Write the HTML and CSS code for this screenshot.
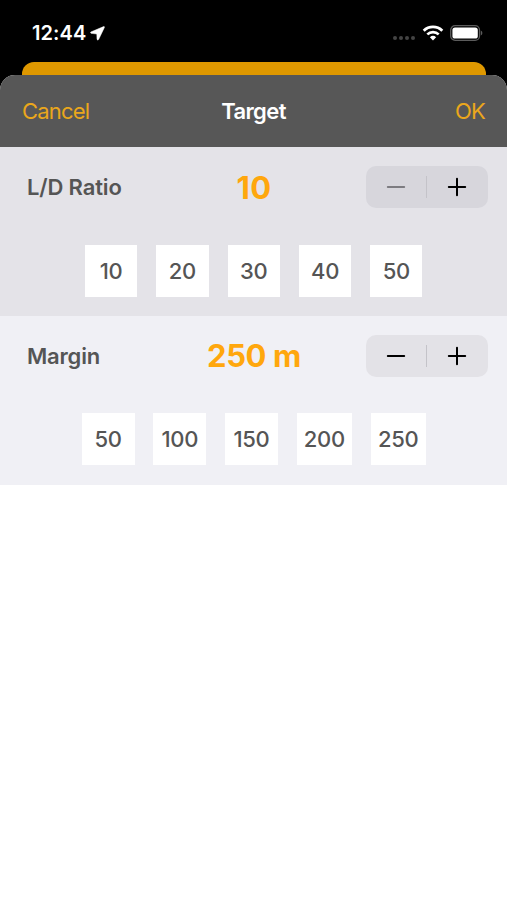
FILE: index.html
```html
<!DOCTYPE html>
<html lang="en">
<head>
    <meta charset="UTF-8">
    <meta name="viewport" content="width=device-width, initial-scale=1.0">
    <title>Target</title>
    <link rel="stylesheet" href="styles.css">
</head>
<body>
    <div class="status-bar">
        <div class="status-left">
            <span class="time">12:44</span>
            <svg class="location" width="15" height="15" viewBox="0 0 15 15">
                <path d="M13.6 0.6 L0.8 6 Q0 6.8 1 7.3 L6.8 8 L7 13.4 Q7.6 14.6 8.6 13.6 L14.4 1.4 Q14.6 0.3 13.6 0.6 Z" fill="#fff" stroke="#fff" stroke-width="0.5"/>
            </svg>
        </div>
        <div class="status-right">
            <svg width="24" height="6" viewBox="0 0 24 6" fill="#444">
                <circle cx="3" cy="3" r="2"/>
                <circle cx="9" cy="3" r="2"/>
                <circle cx="15" cy="3" r="2"/>
                <circle cx="21" cy="3" r="2"/>
            </svg>
            <svg class="wifi" width="22" height="16" viewBox="0 0 22 16">
                <path d="M1.7 5.7 A13.3 13.3 0 0 1 20.3 5.7" fill="none" stroke="#fff" stroke-width="2.8"/>
                <path d="M5.3 9.4 A8.2 8.2 0 0 1 16.7 9.4" fill="none" stroke="#fff" stroke-width="2.6"/>
                <path d="M7.9 12.2 A4.5 4.5 0 0 1 14.1 12.2 L11 15.4 Z" fill="#fff"/>
            </svg>
            <svg class="battery" width="33" height="16" viewBox="0 0 33 16">
                <rect x="0.7" y="0.7" width="28.8" height="14.6" rx="4.4" fill="none" stroke="#5c5c5c" stroke-width="1.3"/>
                <rect x="2.4" y="2.4" width="25.4" height="11.2" rx="2.6" fill="#fff"/>
                <path d="M30.8 5.4 Q32.4 6.2 32.4 8 Q32.4 9.8 30.8 10.6 Z" fill="#5c5c5c"/>
            </svg>
        </div>
    </div>
    <div class="back-card"></div>
    <div class="sheet">
        <div class="navbar">
            <a class="cancel">Cancel</a>
            <h1>Target</h1>
            <a class="ok">OK</a>
        </div>
        <div class="section ratio">
            <div class="row">
                <span class="label label-ratio">L/D Ratio</span>
                <span class="value">10</span>
                <div class="stepper">
                    <svg class="disabled" width="20" height="20" viewBox="0 0 20 20"><path d="M1.8 10 H18.2"/></svg>
                    <span class="divider"></span>
                    <svg width="20" height="20" viewBox="0 0 20 20"><path d="M1.8 10 H18.2 M10 1.8 V18.2"/></svg>
                </div>
            </div>
            <div class="presets">
                <button>10</button>
                <button>20</button>
                <button>30</button>
                <button>40</button>
                <button>50</button>
            </div>
        </div>
        <div class="section margin">
            <div class="row">
                <span class="label">Margin</span>
                <span class="value">250 m</span>
                <div class="stepper">
                    <svg width="20" height="20" viewBox="0 0 20 20"><path d="M1.8 10 H18.2"/></svg>
                    <span class="divider"></span>
                    <svg width="20" height="20" viewBox="0 0 20 20"><path d="M1.8 10 H18.2 M10 1.8 V18.2"/></svg>
                </div>
            </div>
            <div class="presets">
                <button>50</button>
                <button>100</button>
                <button>150</button>
                <button class="wide">200</button>
                <button class="wide">250</button>
            </div>
        </div>
    </div>
</body>
</html>
```
FILE: styles.css
```css
* {
    box-sizing: border-box;
}
body {
    font-family: Inter, "Liberation Sans", sans-serif;
    margin: 0;
    background: #000;
    color: #555;
    height: 900px;
    overflow: hidden;
    display: flex;
    flex-direction: column;
}
.status-bar {
    height: 62px;
    padding: 0 24px 0 32px;
    display: flex;
    justify-content: space-between;
}
.status-left {
    display: flex;
    padding-top: 21px;
}
.time {
    color: #fff;
    font-size: 20px;
    font-weight: 600;
    line-height: 25px;
    letter-spacing: 0.1px;
}
.location {
    margin: 5px 0 0 4px;
}
.status-right {
    display: flex;
    padding-top: 25px;
}
.status-right svg:first-child {
    margin-top: 10px;
}
.wifi {
    margin-left: 6px;
}
.battery {
    margin-left: 6px;
    margin-right: 0;
}
.back-card {
    height: 13px;
    margin: 0 21px 0 22px;
    background: #df9800;
    border-radius: 12px 12px 0 0;
}
.sheet {
    flex: 1;
    background: #fff;
    border-radius: 15px 15px 0 0;
    overflow: hidden;
}
.navbar {
    height: 72.3px;
    padding: 0 22px;
    background: #575757;
    display: grid;
    grid-template-columns: 1fr auto 1fr;
    align-items: center;
    font-size: 22px;
}
.navbar a {
    color: #eba71c;
}
.cancel {
    letter-spacing: -0.8px;
}
.ok {
    text-align: right;
    letter-spacing: -0.8px;
}
h1 {
    margin: 0;
    color: #fff;
    font-size: 22px;
    font-weight: 600;
    letter-spacing: -0.6px;
}
.section {
    height: 168.8px;
    padding: 19px 19.5px 0 27px;
}
.ratio {
    background: #e4e3e8;
}
.margin {
    background: #f0f0f5;
}
.row {
    display: grid;
    grid-template-columns: 122px 1fr 121.5px;
    align-items: center;
    height: 41.5px;
}
.label {
    font-size: 22px;
    font-weight: 600;
    letter-spacing: -0.2px;
    white-space: nowrap;
}
.label-ratio {
    letter-spacing: -0.15px;
}
.value {
    color: #ffa70d;
    font-size: 31px;
    font-weight: 700;
    text-align: center;
    margin-left: -7px;
    letter-spacing: -0.4px;
    line-height: 41px;
}
.ratio .value {
    letter-spacing: 0.3px;
}
.stepper {
    height: 41.5px;
    border-radius: 10px;
    background: #d7d6dc;
    display: flex;
    align-items: center;
    justify-content: space-between;
    padding: 0 20.5px 0 20px;
}
.margin .stepper {
    background: #e3e2e7;
}
.stepper path {
    stroke: #000;
    stroke-width: 2;
    stroke-linecap: round;
}
.stepper .disabled path {
    stroke: #7d7c81;
}
.divider {
    width: 1px;
    height: 22px;
    background: #c4c3c9;
}
.presets {
    display: flex;
    justify-content: center;
    gap: 19px;
    margin: 36.8px 0 0 -7px;
}
.margin .presets {
    gap: 18.7px;
}
button {
    width: 52.3px;
    height: 52px;
    padding: 0;
    border: none;
    background: #fff;
    color: #555;
    font-family: inherit;
    font-size: 22px;
    font-weight: 550;
    letter-spacing: -0.3px;
}
.margin button {
    width: 53px;
}
.margin .wide {
    width: 55.3px;
}
```
